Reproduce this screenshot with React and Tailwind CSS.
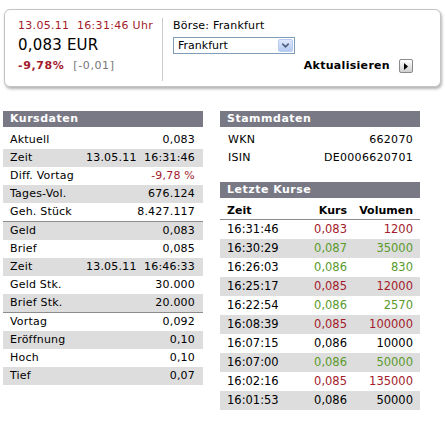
import { ChevronDown } from 'lucide-react';

const RED = 'text-[#a31b2b]';
const GREEN = 'text-[#5a9a2c]';

// each group: rows + whether the first row is shaded
const kursdaten = [
  {
    shadeFirst: false,
    rows: [
      { label: 'Aktuell', value: '0,083' },
      { label: 'Zeit', value: '13.05.11\u00a0\u00a016:31:46' },
      { label: 'Diff. Vortag', value: '-9,78 %', color: RED },
      { label: 'Tages-Vol.', value: '676.124' },
      { label: 'Geh. Stück', value: '8.427.117' },
    ],
  },
  {
    shadeFirst: true,
    rows: [
      { label: 'Geld', value: '0,083' },
      { label: 'Brief', value: '0,085' },
      { label: 'Zeit', value: '13.05.11\u00a0\u00a016:46:33' },
      { label: 'Geld Stk.', value: '30.000' },
      { label: 'Brief Stk.', value: '20.000' },
    ],
  },
  {
    shadeFirst: false,
    rows: [
      { label: 'Vortag', value: '0,092' },
      { label: 'Eröffnung', value: '0,10' },
      { label: 'Hoch', value: '0,10' },
      { label: 'Tief', value: '0,07' },
    ],
  },
];

const kurse = [
  { zeit: '16:31:46', kurs: '0,083', vol: '1200', color: RED },
  { zeit: '16:30:29', kurs: '0,087', vol: '35000', color: GREEN },
  { zeit: '16:26:03', kurs: '0,086', vol: '830', color: GREEN },
  { zeit: '16:25:17', kurs: '0,085', vol: '12000', color: RED },
  { zeit: '16:22:54', kurs: '0,086', vol: '2570', color: GREEN },
  { zeit: '16:08:39', kurs: '0,085', vol: '100000', color: RED },
  { zeit: '16:07:15', kurs: '0,086', vol: '10000', color: 'text-black' },
  { zeit: '16:07:00', kurs: '0,086', vol: '50000', color: GREEN },
  { zeit: '16:02:16', kurs: '0,085', vol: '135000', color: RED },
  { zeit: '16:01:53', kurs: '0,086', vol: '50000', color: 'text-black' },
];

const PanelHeader = ({ title }) => (
  <div className="h-[16px] bg-[#797986] pl-[7px] text-[11px] font-bold leading-[16px] tracking-[0.5px] text-white">
    {title}
  </div>
);

const Quote = () => (
  <div className="mx-[4px] mt-[9px] flex h-[78px] rounded-[6px] border border-[#c4c4c4] bg-white shadow-[1px_2px_3px_rgba(0,0,0,0.3)]">
    <div className="w-[157px] pl-[13px] pt-[9px]">
      <div className={`text-[11px] leading-[14px] tracking-[0.3px] ${RED}`}>13.05.11&nbsp;&nbsp;16:31:46 Uhr</div>
      <div className="mt-[2px] text-[15px] leading-[20px] tracking-[0.2px] text-black">0,083 EUR</div>
      <div className="mt-[4px] text-[11px] leading-[14px]">
        <span className={`font-bold tracking-[0.6px] ${RED}`}>-9,78%</span>
        <span className="ml-[9px] tracking-[0.6px] text-[#777]">[-0,01]</span>
      </div>
    </div>
    <div className="mb-[5px] mt-[8px] border-l border-[#cccccc]" />
    <div className="flex-1 pl-[10px] pr-[27px] pt-[9px]">
      <div className="text-[11px] leading-[14px] tracking-[0.2px] text-black">Börse: Frankfurt</div>
      <div className="mt-[4px] flex h-[17px] w-[122px] items-center justify-between border border-[#7f9db9] bg-white pl-[4px] pr-[1px]">
        <span className="text-[11px] leading-[14px] text-black">Frankfurt</span>
        <span className="flex h-[13px] w-[15px] items-center justify-center rounded-[2px] border border-[#b9cbef] bg-gradient-to-b from-[#dfe8fb] to-[#b4c9f1]">
          <ChevronDown size={11} strokeWidth={3.5} className="text-[#4d6185]" />
        </span>
      </div>
      <div className="mt-[5px] flex items-center justify-end gap-[9px]">
        <span className="text-[11px] font-bold leading-[14px] tracking-[0.3px] text-black">Aktualisieren</span>
        <span className="flex h-[14px] w-[14px] items-center justify-center rounded-[2px] border border-[#8a8a8a] bg-gradient-to-b from-white to-[#cfcfcf]">
          <svg width="4" height="7" viewBox="0 0 4 7">
            <path d="M0 0 L4 3.5 L0 7 Z" fill="#000" />
          </svg>
        </span>
      </div>
    </div>
  </div>
);

const Kursdaten = () => (
  <div className="ml-[3px] w-[200px]">
    <PanelHeader title="Kursdaten" />
    <div className="mt-[4px]">
      {kursdaten.map((group, gi) => (
        <div key={gi} className={gi < kursdaten.length - 1 ? 'border-b border-[#8c8c8c]' : ''}>
          {group.rows.map((row, i) => {
            const shaded = group.shadeFirst ? i % 2 === 0 : i % 2 === 1;
            return (
              <div
                key={row.label + i}
                className={`flex h-[18px] items-center justify-between pl-[7px] pr-[8px] text-[11px] tracking-[0.2px] ${
                  shaded ? 'bg-[#dddddd]' : 'bg-white'
                }`}
              >
                <span className="text-black">{row.label}</span>
                <span className={row.color || 'text-black'}>{row.value}</span>
              </div>
            );
          })}
        </div>
      ))}
    </div>
  </div>
);

const Stammdaten = () => (
  <div className="ml-[17px] w-[200px]">
    <PanelHeader title="Stammdaten" />
    <div className="mt-[4px] text-[11px] tracking-[0.3px] text-black">
      <div className="flex h-[18px] items-center justify-between pl-[8px] pr-[7px]">
        <span>WKN</span>
        <span>662070</span>
      </div>
      <div className="flex h-[18px] items-center justify-between pl-[8px] pr-[7px]">
        <span>ISIN</span>
        <span>DE0006620701</span>
      </div>
    </div>
    <div className="mt-[15px]">
      <PanelHeader title="Letzte Kurse" />
      <div className="grid h-[22px] grid-cols-[1fr_60px_66px] items-end border-b border-[#8c8c8c] pb-[2px] pl-[7px] pr-[7px] text-[11px] font-bold leading-[13px] text-black">
        <span>Zeit</span>
        <span className="text-right">Kurs</span>
        <span className="text-right">Volumen</span>
      </div>
      {kurse.map((k, i) => (
        <div
          key={k.zeit + i}
          className={`grid h-[19px] grid-cols-[1fr_60px_66px] items-center pl-[7px] pr-[7px] text-[11.5px] ${
            i % 2 === 1 ? 'bg-[#dddddd]' : 'bg-white'
          }`}
        >
          <span className="text-black">{k.zeit}</span>
          <span className={`text-right ${k.color}`}>{k.kurs}</span>
          <span className={`text-right ${k.color}`}>{k.vol}</span>
        </div>
      ))}
    </div>
  </div>
);

const App = () => {
  return (
    <div className="h-[430px] w-[445px] overflow-hidden bg-white font-['DejaVu_Sans',sans-serif]">
      <Quote />
      <div className="mt-[24px] flex">
        <Kursdaten />
        <Stammdaten />
      </div>
    </div>
  );
};

export default App;
